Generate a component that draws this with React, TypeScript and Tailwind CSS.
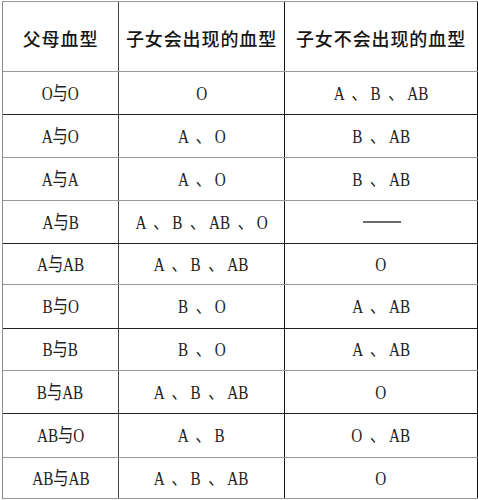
import React from "react";

type Row = { a: string; b: string; c: string; h: string; dark: boolean };

const rows: Row[] = [
  { a: "O与O", b: "O", c: "A  、 B  、 AB", h: "h-[43px]", dark: true },
  { a: "A与O", b: "A  、 O", c: "B  、 AB", h: "h-[43px]", dark: false },
  { a: "A与A", b: "A  、 O", c: "B  、 AB", h: "h-[43px]", dark: false },
  { a: "A与B", b: "A  、 B  、 AB  、 O", c: "—", h: "h-[43px]", dark: true },
  { a: "A与AB", b: "A  、 B  、 AB", c: "O", h: "h-[41px]", dark: false },
  { a: "B与O", b: "B  、 O", c: "A  、 AB", h: "h-[44px]", dark: true },
  { a: "B与B", b: "B  、 O", c: "A  、 AB", h: "h-[42px]", dark: false },
  { a: "B与AB", b: "A  、 B  、 AB", c: "O", h: "h-[43px]", dark: true },
  { a: "AB与O", b: "A  、 B", c: "O  、 AB", h: "h-[44px]", dark: false },
  { a: "AB与AB", b: "A  、 B  、 AB", c: "O", h: "h-[41px]", dark: false },
];

function Txt({ t }: { t: string }) {
  if (t === "—") {
    return <div className="mt-[-1px] ml-[1px] h-[2px] w-[38px] bg-[#6a6a6a]" />;
  }
  return (
    <span className="inline-block scale-x-[0.8] whitespace-pre text-[19px] leading-none text-[#222] [font-family:'Liberation_Serif','Noto_Sans_CJK_SC',serif]">
      {t}
    </span>
  );
}

export default function App() {
  return (
    <div className="h-[500px] w-[478px] bg-white pt-[1px] pl-[2px]">
      <div className="w-[476px] border-t border-l border-t-[#9a9a9a] border-l-[#8a8a8a]">
        <div className="grid h-[70px] grid-cols-[116px_166px_194px] border-b border-b-[#9a9a9a] text-[18px] font-medium tracking-[0.9px] text-[#151515] [font-family:'Noto_Sans_CJK_SC',sans-serif]">
          <div className="flex items-center justify-center border-r border-r-[#444] pt-[3px]">父母血型</div>
          <div className="flex items-center justify-center border-r border-r-[#111] pt-[3px]">子女会出现的血型</div>
          <div className="flex items-center justify-center border-r-2 border-r-[#111] pt-[3px]">子女不会出现的血型</div>
        </div>
        {rows.map((r, i) => (
          <div
            key={i}
            className={`grid grid-cols-[116px_166px_194px] border-b ${r.h} ${
              r.dark ? "border-b-[#222]" : "border-b-[#999]"
            }`}
          >
            <div className="flex items-center justify-center border-r border-r-[#444]">
              <Txt t={r.a} />
            </div>
            <div className="flex items-center justify-center border-r border-r-[#111]">
              <Txt t={r.b} />
            </div>
            <div className="flex items-center justify-center border-r-2 border-r-[#111]">
              <Txt t={r.c} />
            </div>
          </div>
        ))}
      </div>
    </div>
  );
}
